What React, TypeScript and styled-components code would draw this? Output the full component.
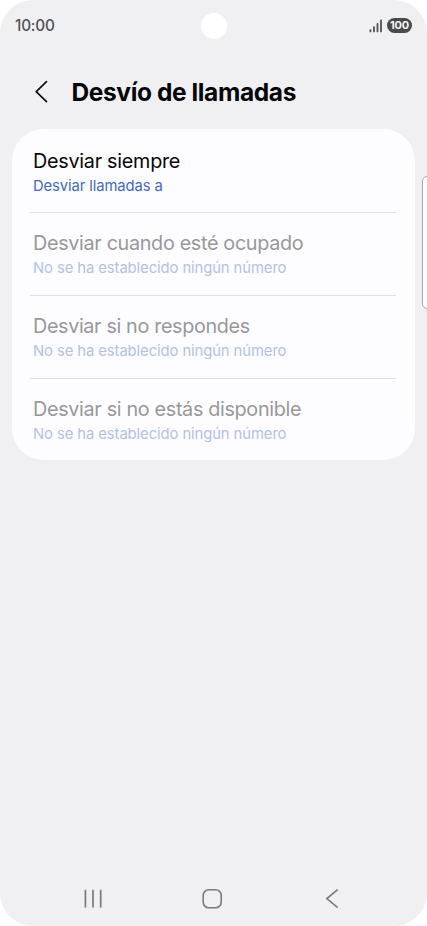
import React from "react";
import styled, { createGlobalStyle } from "styled-components";

const GlobalStyle = createGlobalStyle`
  html, body { margin: 0; padding: 0; background: #ffffff; }
  * { box-sizing: border-box; }
`;

const Screen = styled.div`
  position: relative;
  display: flex;
  flex-direction: column;
  width: 427px;
  height: 926px;
  overflow: hidden;
  border-radius: 33px;
  background: #f0f0f3;
  font-family: Inter, "Noto Sans", sans-serif;
  color: #050507;
`;

const StatusBar = styled.header`
  display: grid;
  grid-template-columns: 1fr 26px 1fr;
  align-items: center;
  height: 51px;
  padding: 0 15px;
`;

const Clock = styled.time`
  font-size: 15.3px;
  font-weight: 550;
  line-height: 20px;
  letter-spacing: -0.2px;
  padding-top: 1px;
  color: #505153;
`;

const Camera = styled.span`
  width: 26px;
  height: 26px;
  border-radius: 50%;
  background: #ffffff;
`;

const Indicators = styled.div`
  display: flex;
  justify-content: flex-end;
  align-items: center;
  gap: 4px;
`;

const Battery = styled.span`
  display: flex;
  align-items: center;
  justify-content: center;
  width: 25px;
  height: 15px;
  border-radius: 8px;
  background: #48494a;
  color: #f4f4f5;
  font-size: 11px;
  font-weight: 650;
  line-height: 15px;
  letter-spacing: -0.2px;
`;

const TitleBar = styled.div`
  display: flex;
  align-items: center;
  gap: 22.5px;
  height: 78.3px;
  padding: 3px 34px 0;
`;

const Title = styled.h1`
  margin: 0;
  font-size: 24.5px;
  font-weight: 700;
  line-height: 32px;
  letter-spacing: -0.39px;
  white-space: nowrap;
`;

const Card = styled.ul`
  list-style: none;
  margin: 0 12px;
  padding: 0 19px 0 18px;
  height: 331px;
  border-radius: 32px;
  background: #fdfdff;
`;

const Row = styled.li<{ $disabled?: boolean }>`
  display: flex;
  flex-direction: column;
  height: 82.75px;
  padding: 19.4px 0 0 3px;
  color: ${({ $disabled }) => ($disabled ? "#98989a" : "#08080a")};
  white-space: nowrap;

  & + & {
    border-top: 1px solid #e0e0e3;
    padding-top: 18.2px;
  }
`;

const Label = styled.span<{ $tracking: number }>`
  font-size: 19.8px;
  line-height: 25px;
  letter-spacing: ${({ $tracking }) => $tracking}px;
`;

const Detail = styled.span<{ $muted?: boolean; $tracking: number }>`
  font-size: 14.8px;
  line-height: 24px;
  letter-spacing: ${({ $tracking }) => $tracking}px;
  color: ${({ $muted }) => ($muted ? "#b3c1e5" : "#4569b8")};
`;

const SideHandle = styled.div`
  position: absolute;
  top: 176px;
  right: -6px;
  width: 11px;
  height: 133px;
  border: 1px solid #a7a7aa;
  border-radius: 5px;
  background: #fdfdff;
`;

const NavBar = styled.nav`
  display: flex;
  align-items: center;
  height: 55px;
  margin-top: auto;
  padding: 0 88px 0 83px;
`;

const NavSlot = styled.span<{ $width: number }>`
  display: flex;
  width: ${({ $width }) => $width}px;
`;

const rows = [
  { label: "Desviar siempre", detail: "Desviar llamadas a", labelTracking: -0.27, detailTracking: -0.1 },
  { label: "Desviar cuando esté ocupado", detail: "No se ha establecido ningún número", labelTracking: -0.33, detailTracking: -0.08, disabled: true },
  { label: "Desviar si no respondes", detail: "No se ha establecido ningún número", labelTracking: -0.36, detailTracking: -0.08, disabled: true },
  { label: "Desviar si no estás disponible", detail: "No se ha establecido ningún número", labelTracking: -0.33, detailTracking: -0.08, disabled: true },
];

export default function App() {
  return (
    <>
      <GlobalStyle />
      <Screen>
        <StatusBar>
          <Clock>10:00</Clock>
          <Camera />
          <Indicators>
            <svg width="14" height="14" viewBox="0 0 14 14" stroke="#505153" strokeWidth="1.8" strokeLinecap="round">
              <path d="M1.5 11.2V12.4" />
              <path d="M5 8.2V12.4" />
              <path d="M8.5 4.8V12.4" />
              <path d="M12 1.5V12.4" />
            </svg>
            <Battery>100</Battery>
          </Indicators>
        </StatusBar>
        <TitleBar>
          <svg width="15" height="24" viewBox="0 0 15 24" fill="none" stroke="#08080a" strokeWidth="1.6" strokeLinecap="round" strokeLinejoin="round">
            <path d="M12.5 1.6L2.2 11.6L12.5 21.6" />
          </svg>
          <Title>Desvío de llamadas</Title>
        </TitleBar>
        <Card>
          {rows.map((row) => (
            <Row key={row.label} $disabled={row.disabled}>
              <Label $tracking={row.labelTracking}>{row.label}</Label>
              <Detail $muted={row.disabled} $tracking={row.detailTracking}>{row.detail}</Detail>
            </Row>
          ))}
        </Card>
        <SideHandle />
        <NavBar>
          <NavSlot $width={119}>
            <svg width="20" height="20" viewBox="0 0 20 20" stroke="#7a7a7d" strokeWidth="1.7">
              <path d="M2.4 0.8V18.6M10 0.8V18.6M17.7 0.8V18.6" />
            </svg>
          </NavSlot>
          <NavSlot $width={123}>
            <svg width="20" height="20" viewBox="0 0 20 20" fill="none" stroke="#7a7a7d" strokeWidth="1.6">
              <rect x="1.2" y="0.8" width="18" height="18" rx="5.6" />
            </svg>
          </NavSlot>
          <NavSlot $width={14}>
            <svg width="14" height="20" viewBox="0 0 14 20" fill="none" stroke="#7a7a7d" strokeWidth="1.6">
              <path d="M12.7 0.6L1.8 9.6L12.7 18.6" />
            </svg>
          </NavSlot>
        </NavBar>
      </Screen>
    </>
  );
}
